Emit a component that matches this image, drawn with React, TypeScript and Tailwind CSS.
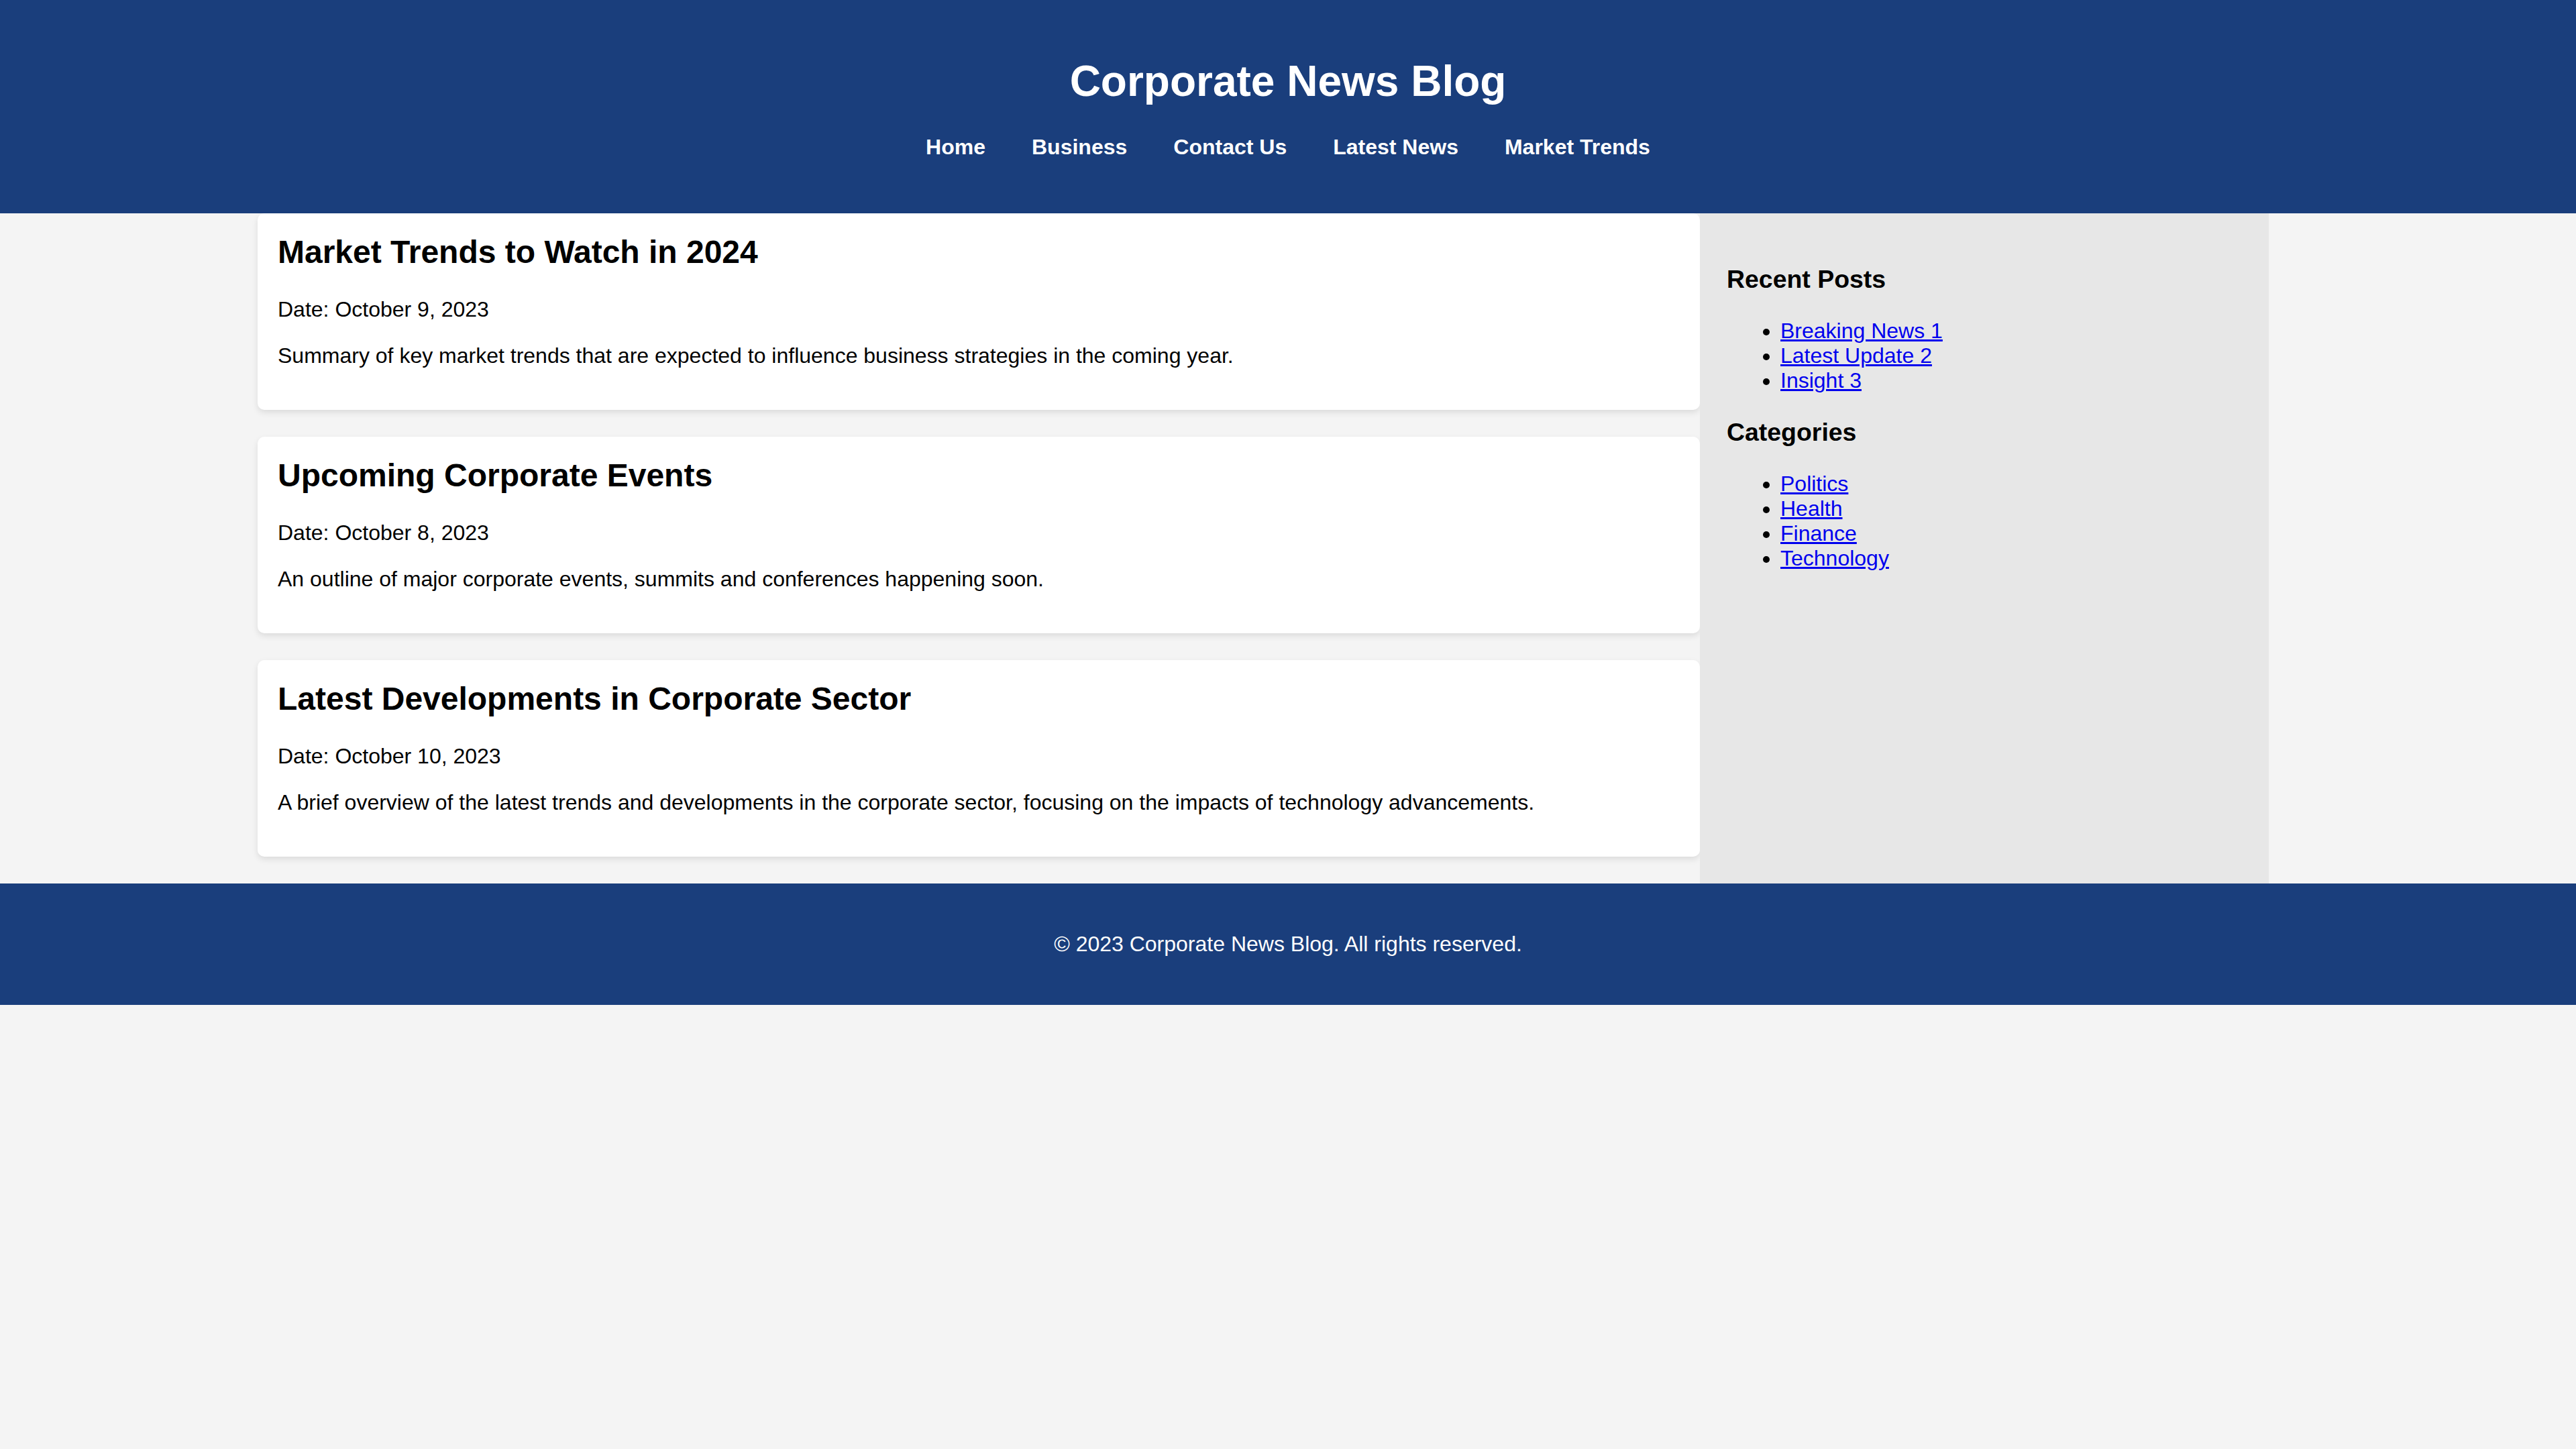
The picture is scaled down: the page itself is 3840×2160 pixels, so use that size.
import React from "react";

const posts = [
  {
    title: "Market Trends to Watch in 2024",
    date: "Date: October 9, 2023",
    summary:
      "Summary of key market trends that are expected to influence business strategies in the coming year.",
  },
  {
    title: "Upcoming Corporate Events",
    date: "Date: October 8, 2023",
    summary:
      "An outline of major corporate events, summits and conferences happening soon.",
  },
  {
    title: "Latest Developments in Corporate Sector",
    date: "Date: October 10, 2023",
    summary:
      "A brief overview of the latest trends and developments in the corporate sector, focusing on the impacts of technology advancements.",
  },
];

const navItems = ["Home", "Business", "Contact Us", "Latest News", "Market Trends"];
const recent = ["Breaking News 1", "Latest Update 2", "Insight 3"];
const categories = ["Politics", "Health", "Finance", "Technology"];

export default function App() {
  return (
    <div
      className="min-h-[2160px] w-full bg-[#f4f4f4] text-black text-[32px] leading-[normal]"
      style={{ fontFamily: '"Liberation Sans", Arial, sans-serif' }}
    >
      <header className="bg-[#1a3e7c] text-white pt-[84px] pb-[80px] text-center">
        <h1 className="text-[64px] font-bold leading-[normal]">Corporate News Blog</h1>
        <nav className="mt-[43px] flex justify-center gap-[69px] text-[32px] font-bold leading-[normal]">
          {navItems.map((n) => (
            <a key={n} href="#" className="text-white no-underline">
              {n}
            </a>
          ))}
        </nav>
      </header>

      <main className="mx-auto w-[3072px] flex items-stretch">
        <div className="w-[2150px] shrink-0">
          {posts.map((p) => (
            <article
              key={p.title}
              className="bg-white rounded-[10px] shadow-[0_4px_10px_rgba(0,0,0,0.1)] p-[30px] mb-[40px]"
            >
              <h2 className="text-[48px] font-bold leading-[normal] mb-[40px]">{p.title}</h2>
              <p className="leading-[normal] mb-[32px]">{p.date}</p>
              <p className="leading-[normal] mb-[32px]">{p.summary}</p>
            </article>
          ))}
        </div>
        <aside className="w-[848px] shrink-0 bg-[#e7e7e7] px-[40px] pt-[77px] pb-[40px]">
          <h3 className="text-[37.44px] font-bold leading-[normal] mb-[37px]">Recent Posts</h3>
          <ul className="list-disc pl-[80px] mb-[37px]">
            {recent.map((r) => (
              <li key={r} className="leading-[normal]">
                <a href="#" className="text-[#0000ee] underline">
                  {r}
                </a>
              </li>
            ))}
          </ul>
          <h3 className="text-[37.44px] font-bold leading-[normal] mb-[37px]">Categories</h3>
          <ul className="list-disc pl-[80px]">
            {categories.map((r) => (
              <li key={r} className="leading-[normal]">
                <a href="#" className="text-[#0000ee] underline">
                  {r}
                </a>
              </li>
            ))}
          </ul>
        </aside>
      </main>

      <footer className="bg-[#1a3e7c] text-white text-center py-[72px]">
        <p className="leading-[normal]">© 2023 Corporate News Blog. All rights reserved.</p>
      </footer>
    </div>
  );
}
